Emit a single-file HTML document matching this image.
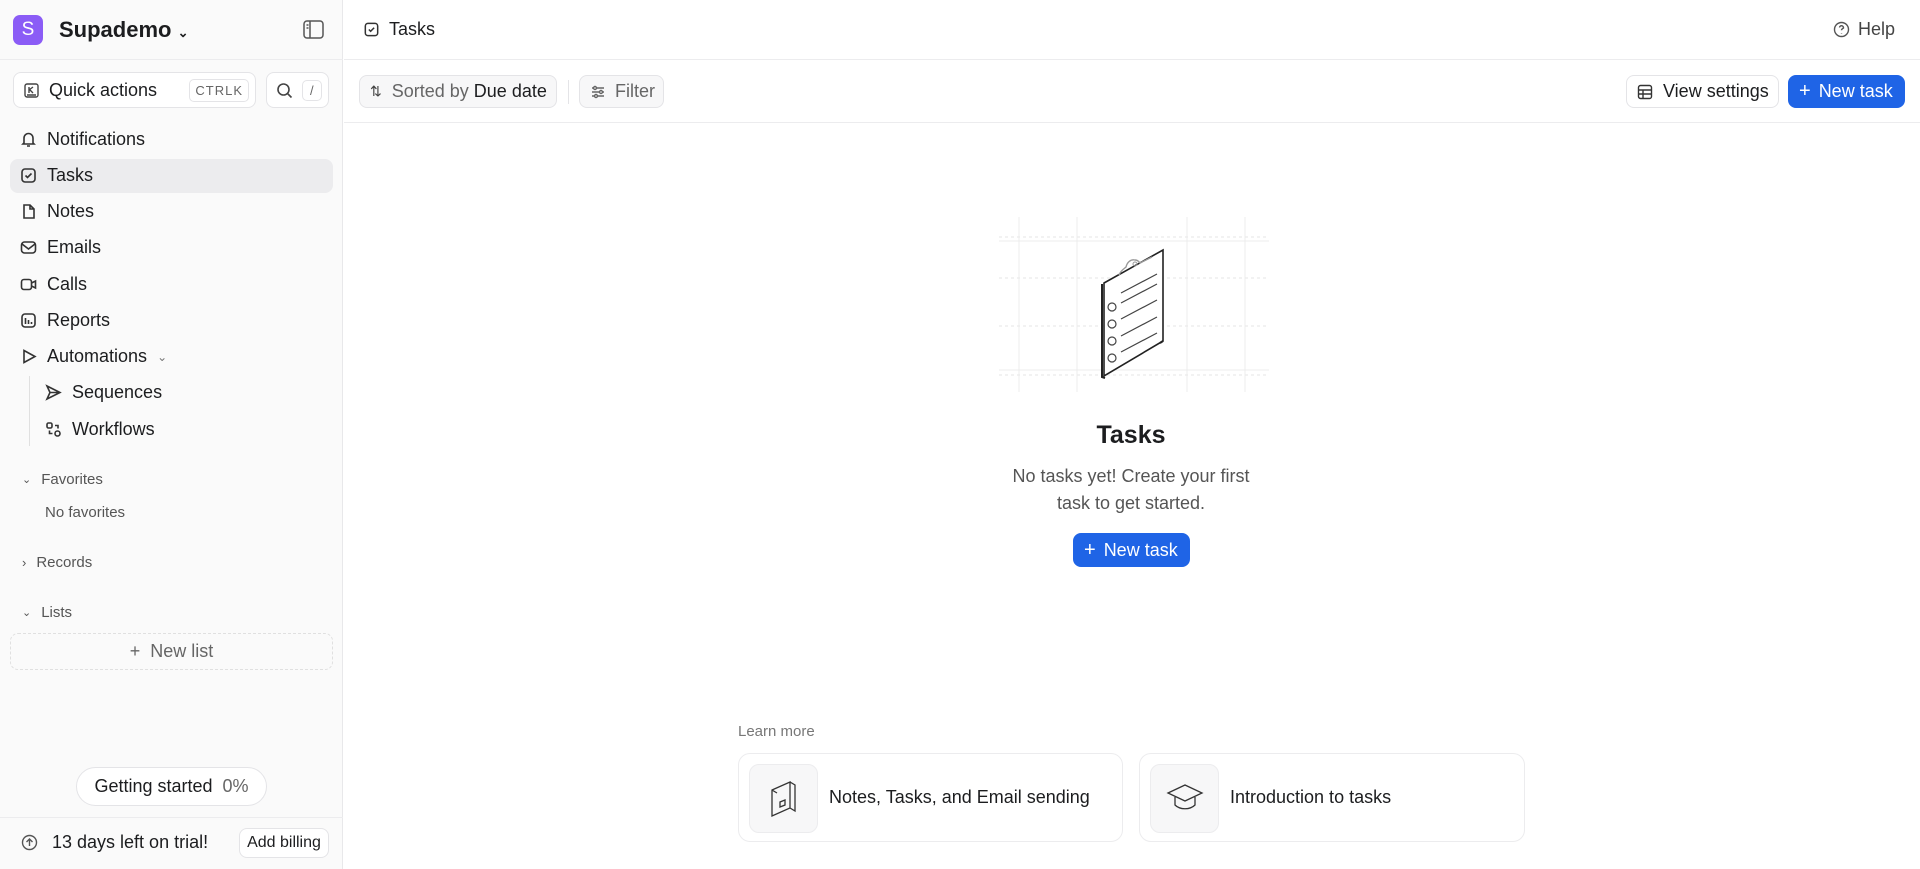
<!DOCTYPE html>
<html><head><meta charset="utf-8"><style>
*{box-sizing:border-box;margin:0;padding:0}
body{width:1920px;height:869px;overflow:hidden;font-family:"Liberation Sans",sans-serif;color:#1c1d1f;background:#fff;position:relative}
.abs{position:absolute}
.sb{left:0;top:0;width:343px;height:869px;background:#fafafa;border-right:1px solid #e8e8ea}
.nav{position:absolute;left:20px;font-size:18px;display:flex;align-items:center;gap:10px}
.nav svg{width:17px;height:17px;stroke:#333;fill:none;stroke-width:1.6}
.btn{position:absolute;border:1px solid #e4e4e7;border-radius:8px;background:#fff;display:flex;align-items:center;font-size:18px}
.blue{background:#1f64e6;color:#fff;border-color:#1f64e6}
.sec{position:absolute;font-size:15px;color:#555;display:flex;align-items:center;gap:10px}
</style></head><body>
<div class="abs sb"></div>
<div class="abs" style="left:13px;top:15px;width:30px;height:30px;border-radius:7px;background:#8b5cf6;color:#fff;font-size:19px;display:flex;align-items:center;justify-content:center">S</div>
<div class="abs" style="left:59px;top:17px;font-size:22px;font-weight:600">Supademo <span style="font-size:13px">&#8964;</span></div>
<svg class="abs" style="left:303px;top:20px" width="21" height="19" viewBox="0 0 21 19" fill="none" stroke="#555" stroke-width="1.5"><rect x="1" y="1" width="19" height="17" rx="3"/><path d="M7 1v17M3.5 5h2M3.5 8h2"/></svg>
<div class="abs" style="left:0;top:59px;width:343px;border-top:1px solid #ececee"></div>
<div class="btn" style="left:13px;top:72px;width:243px;height:36px;padding-left:10px"><svg width="15" height="15" viewBox="0 0 15 15" fill="none" stroke="#444" stroke-width="1.4"><rect x="1" y="1" width="13" height="13" rx="2"/><path d="M5 4v6M5 7l4-3M6 7l3 3M3 12h9"/></svg><span style="margin-left:10px">Quick actions</span><span style="margin-left:auto;margin-right:6px;border:1px solid #e4e4e7;border-radius:5px;font-size:13px;color:#666;padding:3px 5px;letter-spacing:1px">CTRLK</span></div>
<div class="btn" style="left:266px;top:72px;width:63px;height:36px;padding-left:9px"><svg width="17" height="17" viewBox="0 0 17 17" fill="none" stroke="#444" stroke-width="1.6"><circle cx="7.5" cy="7.5" r="5.5"/><path d="M11.5 11.5l4 4"/></svg><span style="margin-left:9px;border:1px solid #e4e4e7;border-radius:5px;font-size:13px;color:#666;padding:2px 7px">/</span></div>
<div class="abs" style="left:10px;top:159px;width:323px;height:34px;background:#ececee;border-radius:8px"></div>
<div class="nav" style="top:129px"><svg viewBox="0 0 17 17"><path d="M4 12V7a4.5 4.5 0 019 0v5l1 1H3zM7 15h3"/></svg>Notifications</div>
<div class="nav" style="top:165px"><svg viewBox="0 0 17 17"><rect x="2" y="2" width="13" height="13" rx="3"/><path d="M5.5 8.5l2 2 4-4"/></svg>Tasks</div>
<div class="nav" style="top:201px"><svg viewBox="0 0 17 17"><path d="M4 2h6l4 4v9H4zM10 2v4h4"/></svg>Notes</div>
<div class="nav" style="top:237px"><svg viewBox="0 0 17 17"><rect x="1.5" y="3" width="14" height="11" rx="3"/><path d="M2 5l6.5 5L15 5"/></svg>Emails</div>
<div class="nav" style="top:274px"><svg viewBox="0 0 17 17"><rect x="1.5" y="3.5" width="10" height="10" rx="2.5"/><path d="M11.5 7l4-2v7l-4-2"/></svg>Calls</div>
<div class="nav" style="top:310px"><svg viewBox="0 0 17 17"><rect x="2" y="2" width="13" height="13" rx="3"/><path d="M5.5 6v6M8.5 8v4M11.5 10v2"/></svg>Reports</div>
<div class="nav" style="top:346px"><svg viewBox="0 0 17 17"><path d="M4 2.5l11 6-11 6z"/></svg>Automations <span style="font-size:12px;color:#777">&#8964;</span></div>
<div class="abs" style="left:29px;top:376px;height:70px;border-left:1px solid #e0e0e0"></div>
<div class="nav" style="top:382px;left:45px"><svg viewBox="0 0 17 17"><path d="M2 2l13 6.5L2 15l3-6.5zM5 8.5h10"/></svg>Sequences</div>
<div class="nav" style="top:419px;left:45px"><svg viewBox="0 0 17 17"><rect x="2" y="2" width="5" height="5" rx="1.5"/><circle cx="12.5" cy="12.5" r="2.5"/><path d="M10 4.5h3v3M4.5 9.5v3h3"/></svg>Workflows</div>
<div class="sec" style="left:22px;top:471px"><span style="font-size:11px">&#8964;</span>Favorites</div>
<div class="sec" style="left:45px;top:504px">No favorites</div>
<div class="sec" style="left:22px;top:554px"><span style="font-size:13px">&#8250;</span>Records</div>
<div class="sec" style="left:22px;top:604px"><span style="font-size:11px">&#8964;</span>Lists</div>
<div class="abs" style="left:10px;top:633px;width:323px;height:37px;border:1px dashed #e0e0e0;border-radius:8px;display:flex;align-items:center;justify-content:center;font-size:18px;color:#666">+&nbsp; New list</div>
<div class="abs" style="left:76px;top:767px;width:191px;height:39px;border:1px solid #e4e4e7;border-radius:20px;background:#fff;display:flex;align-items:center;justify-content:center;font-size:18px">Getting started&nbsp;&nbsp;<span style="color:#666">0%</span></div>
<div class="abs" style="left:0;top:817px;width:343px;border-top:1px solid #ececee"></div>
<svg class="abs" style="left:21px;top:834px" width="17" height="17" viewBox="0 0 17 17" fill="none" stroke="#555" stroke-width="1.4"><circle cx="8.5" cy="8.5" r="7"/><path d="M8.5 12V5M5.5 8l3-3 3 3"/></svg>
<div class="abs" style="left:52px;top:832px;font-size:18px">13 days left on trial!</div>
<div class="btn" style="left:239px;top:828px;width:90px;height:30px;font-size:16px;justify-content:center">Add billing</div>

<svg class="abs" style="left:364px;top:22px" width="15" height="15" viewBox="0 0 17 17" fill="none" stroke="#333" stroke-width="1.7"><rect x="1.5" y="1.5" width="14" height="14" rx="3"/><path d="M5.5 8.5l2 2 4-4"/></svg>
<div class="abs" style="left:389px;top:19px;font-size:18px">Tasks</div>
<svg class="abs" style="left:1833px;top:21px" width="17" height="17" viewBox="0 0 17 17" fill="none" stroke="#555" stroke-width="1.4"><circle cx="8.5" cy="8.5" r="7"/><path d="M6.5 6.5a2 2 0 114 .5c-1 .7-2 1-2 2.3M8.5 12v.5"/></svg>
<div class="abs" style="left:1858px;top:19px;font-size:18px;color:#444">Help</div>
<div class="abs" style="left:344px;top:59px;width:1576px;border-top:1px solid #ececee"></div>
<div class="abs" style="left:344px;top:122px;width:1576px;border-top:1px solid #ececee"></div>
<div class="btn" style="left:359px;top:75px;width:198px;height:33px;padding-left:10px;background:#f7f7f8"><span style="font-size:14px;color:#444">&#8645;</span><span style="margin-left:10px;color:#666">Sorted by</span>&nbsp;<span>Due date</span></div>
<div class="abs" style="left:568px;top:80px;height:24px;border-left:1px solid #e4e4e7"></div>
<div class="btn" style="left:579px;top:75px;width:85px;height:33px;padding-left:10px;background:#f7f7f8;color:#666"><svg width="16" height="16" viewBox="0 0 16 16" fill="none" stroke="#666" stroke-width="1.4"><path d="M2 4h12M2 8h12M2 12h12"/><circle cx="5" cy="4" r="1.5" fill="#f7f7f8"/><circle cx="11" cy="8" r="1.5" fill="#f7f7f8"/><circle cx="6" cy="12" r="1.5" fill="#f7f7f8"/></svg><span style="margin-left:9px">Filter</span></div>
<div class="btn" style="left:1626px;top:75px;width:153px;height:33px;padding-left:10px"><svg width="16" height="16" viewBox="0 0 16 16" fill="none" stroke="#333" stroke-width="1.4"><rect x="1.5" y="1.5" width="13" height="13" rx="2"/><path d="M1.5 6h13M1.5 10h13M6 6v8.5"/></svg><span style="margin-left:10px">View settings</span></div>
<div class="btn blue" style="left:1788px;top:75px;width:117px;height:33px;padding-left:10px"><span style="font-size:20px;font-weight:300">+</span><span style="margin-left:8px">New task</span></div>

<svg class="abs" style="left:999px;top:217px" width="270" height="175" viewBox="0 0 270 175" fill="none">
<g stroke="#e6e6e6" stroke-dasharray="3 3"><path d="M0 20h270M0 61h270M0 109h270M0 158h270"/></g>
<g stroke="#ececec"><path d="M20 0v175M78 0v175M188 0v175M246 0v175M0 24h270M0 153h270"/></g>
<path d="M105 66l59-33v91l-59 35z" fill="#fff" stroke="#222" stroke-width="1.6"/>
<path d="M103 67v93l3 1M164 124l-3 2" stroke="#222" stroke-width="2"/>
<path d="M120 58c2-5 5-6 7-8 1-4 4-8 9-7 3 0 4 2 5 3l12-6" stroke="#999" stroke-width="1.4"/>
<circle cx="136" cy="47" r="2" stroke="#999"/>
<g stroke="#444" stroke-width="1.2"><circle cx="113" cy="90" r="4"/><circle cx="113" cy="107" r="4"/><circle cx="113" cy="124" r="4"/><circle cx="113" cy="141" r="4"/><path d="M122 76l36-19M122 86l36-19M122 102l36-19M122 119l36-19M122 135l36-19"/></g>
</svg>
<div class="abs" style="left:0;width:2262px;top:421px;text-align:center;font-size:25px;font-weight:600">Tasks</div>
<div class="abs" style="left:0;width:2262px;top:463px;text-align:center;font-size:18px;color:#555;line-height:27px">No tasks yet! Create your first<br>task to get started.</div>
<div class="btn blue" style="left:1073px;top:533px;width:117px;height:34px;padding-left:10px"><span style="font-size:20px;font-weight:300">+</span><span style="margin-left:8px">New task</span></div>

<div class="abs" style="left:738px;top:723px;font-size:15px;color:#777">Learn more</div>
<div class="abs" style="left:738px;top:753px;width:385px;height:89px;border:1px solid #ececee;border-radius:12px"></div>
<div class="abs" style="left:749px;top:764px;width:69px;height:69px;border:1px solid #ececee;border-radius:10px;background:#f7f7f8"></div>
<svg class="abs" style="left:768px;top:780px" width="32" height="38" viewBox="0 0 32 38" fill="none" stroke="#333" stroke-width="1.3"><path d="M4 10l18-8v26L4 36zM22 2l5 3v26l-5 -3M4 10l5 3"/><path d="M12 22l5-2v5l-5 2z"/></svg>
<div class="abs" style="left:829px;top:787px;font-size:18px">Notes, Tasks, and Email sending</div>
<div class="abs" style="left:1139px;top:753px;width:386px;height:89px;border:1px solid #ececee;border-radius:12px"></div>
<div class="abs" style="left:1150px;top:764px;width:69px;height:69px;border:1px solid #ececee;border-radius:10px;background:#f7f7f8"></div>
<svg class="abs" style="left:1166px;top:783px" width="38" height="30" viewBox="0 0 38 30" fill="none" stroke="#333" stroke-width="1.3"><path d="M2 10l17-8 17 8-17 8z"/><path d="M9 14v8c5 5 15 5 20 0v-8"/></svg>
<div class="abs" style="left:1230px;top:787px;font-size:18px">Introduction to tasks</div>
</body></html>
